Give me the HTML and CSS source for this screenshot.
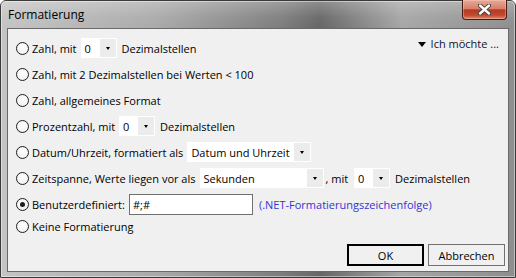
FILE: index.html
```html
<!DOCTYPE html>
<html lang="de">
<head>
    <meta charset="UTF-8">
    <title>Formatierung</title>
    <link rel="stylesheet" href="styles.css">
</head>
<body>

<div class="window">
    <div class="titlebar">
        <span class="title">Formatierung</span>
        <div class="close">
            <svg width="13" height="11" viewBox="0 0 13 11">
                <path d="M2 1.5 L11 9.5 M11 1.5 L2 9.5" stroke="#3a3a3a" stroke-width="4.2" stroke-linecap="round"/>
                <path d="M2 1.5 L11 9.5 M11 1.5 L2 9.5" stroke="#ffffff" stroke-width="2.4" stroke-linecap="round"/>
            </svg>
        </div>
    </div>

    <div class="client">
        <div class="options">
            <div class="row">
                <span class="radio"></span>
                <span class="label">Zahl, mit</span>
                <div class="combo small"><span class="value">0</span><span class="drop"></span></div>
                <span class="label">Dezimalstellen</span>
                <div class="more"><span class="more-arrow"></span>Ich möchte ...</div>
            </div>
            <div class="row">
                <span class="radio"></span>
                <span class="label">Zahl, mit 2 Dezimalstellen bei Werten &lt; 100</span>
            </div>
            <div class="row">
                <span class="radio"></span>
                <span class="label">Zahl, allgemeines Format</span>
            </div>
            <div class="row">
                <span class="radio"></span>
                <span class="label">Prozentzahl, mit</span>
                <div class="combo small"><span class="value">0</span><span class="drop"></span></div>
                <span class="label">Dezimalstellen</span>
            </div>
            <div class="row">
                <span class="radio"></span>
                <span class="label">Datum/Uhrzeit, formatiert als</span>
                <div class="combo wide"><span class="value">Datum und Uhrzeit</span><span class="drop"></span></div>
            </div>
            <div class="row">
                <span class="radio"></span>
                <span class="label">Zeitspanne, Werte liegen vor als</span>
                <div class="combo wide snug"><span class="value">Sekunden</span><span class="drop"></span></div>
                <span class="label tight">, mit</span>
                <div class="combo small"><span class="value">0</span><span class="drop"></span></div>
                <span class="label">Dezimalstellen</span>
            </div>
            <div class="row">
                <span class="radio checked"></span>
                <span class="label">Benutzerdefiniert:</span>
                <div class="textbox">#;#</div>
                <span class="link">(.NET-Formatierungszeichenfolge)</span>
            </div>
            <div class="row last">
                <span class="radio"></span>
                <span class="label">Keine Formatierung</span>
            </div>
        </div>

        <div class="buttons">
            <button class="btn default">OK</button>
            <button class="btn">Abbrechen</button>
        </div>
    </div>
</div>

</body>
</html>
```

FILE: styles.css
```css
/* Page */
body {
    margin: 0;
    font-family: 'Open Sans', 'Noto Sans', sans-serif;
    font-size: 11px;
    color: #000;
    background: #fff;
}

/* Window frame */
.window {
    width: 516px;
    height: 278px;
    box-sizing: border-box;
    display: flex;
    flex-direction: column;
    border: 1px solid #3a3a3a;
    border-radius: 6px 6px 0 0;
    background: linear-gradient(90deg, #c4c4c4 0%, #aaaaaa 30%, #7c7c7c 55%, #666666 62%, #a6a6a6 78%, #8e8e8e 100%);
    box-shadow: inset 0 0 0 1px rgba(255, 255, 255, 0.45);
}

.titlebar {
    height: 27px;
    display: flex;
    align-items: flex-start;
    padding-left: 7px;
    background: linear-gradient(180deg, rgba(255, 255, 255, 0.25) 0%, rgba(255, 255, 255, 0.05) 60%, rgba(0, 0, 0, 0) 100%);
}

.title {
    font-size: 12px;
    line-height: 16px;
    padding-top: 6px;
}

.close {
    margin-left: auto;
    margin-right: 8px;
    margin-top: -1px;
    width: 45px;
    height: 20px;
    box-sizing: border-box;
    display: flex;
    align-items: center;
    justify-content: center;
    border: 1px solid #4a1a12;
    border-top: none;
    border-radius: 0 0 4px 4px;
    background: linear-gradient(180deg, #e9a898 0%, #d8806c 45%, #b63a22 52%, #c24830 80%, #de8a70 100%);
    box-shadow: inset 0 0 0 1px rgba(255, 220, 200, 0.35);
}

/* Client area */
.client {
    flex: 1;
    margin: 0 6px 5px 6px;
    border: 1px solid #6a6a6a;
    background: #f0f0f0;
    display: flex;
    flex-direction: column;
}

.options {
    padding: 6px 9px 0 8px;
}

.row {
    height: 26px;
    display: flex;
    align-items: center;
}

.row.last {
    height: 18px;
}

.radio {
    flex: none;
    width: 13px;
    height: 13px;
    box-sizing: border-box;
    border: 1px solid #1e1e1e;
    border-radius: 50%;
    background: radial-gradient(circle at 50% 40%, #ffffff 0%, #f4f4f4 60%, #e2e2e2 100%);
    margin-right: 3px;
    display: flex;
    align-items: center;
    justify-content: center;
}

.radio.checked::after {
    content: "";
    width: 5px;
    height: 5px;
    border-radius: 50%;
    background: #1e1e1e;
}

.label {
    white-space: nowrap;
    margin-right: 4px;
}

.label.tight {
    margin-right: 6px;
}

/* Combo boxes */
.combo {
    flex: none;
    height: 20px;
    box-sizing: border-box;
    padding: 1px;
    display: flex;
    align-items: center;
    background: #fff;
    margin-right: 5px;
}

.combo.snug {
    margin-right: 2px;
}

.combo.small {
    width: 36px;
}

.combo.wide {
    width: 124px;
}

.combo .value {
    flex: 1;
    padding-left: 3px;
    white-space: nowrap;
}

.combo .drop {
    width: 16px;
    align-self: stretch;
    background: #ececec;
    display: flex;
    align-items: center;
    justify-content: center;
}

.combo .drop::after {
    content: "";
    border-left: 2.5px solid transparent;
    border-right: 2.5px solid transparent;
    border-top: 3px solid #000;
}

/* Text box and link */
.textbox {
    width: 124px;
    height: 21px;
    box-sizing: border-box;
    border: 1px solid #707070;
    background: #fff;
    padding-left: 3px;
    line-height: 19px;
    margin-right: 6px;
}

.link {
    color: #3434d4;
    white-space: nowrap;
}

/* "Ich möchte" menu */
.more {
    margin-left: auto;
    align-self: flex-start;
    margin-top: 1px;
    line-height: 16px;
    display: flex;
    align-items: center;
    color: #10102a;
}

.more-arrow {
    width: 0;
    height: 0;
    border-left: 4px solid transparent;
    border-right: 4px solid transparent;
    border-top: 5px solid #000;
    margin-right: 5px;
}

/* Dialog buttons */
.buttons {
    margin-top: auto;
    display: flex;
    justify-content: flex-end;
    gap: 4px;
    padding: 0 3px 5px 0;
}

.btn {
    width: 77px;
    height: 22px;
    box-sizing: border-box;
    border: 1px solid #707070;
    background: #f0f0f0;
    font-family: inherit;
    font-size: 11px;
    color: #000;
    padding: 0;
}

.btn.default {
    border: 2px solid #000;
}
```
